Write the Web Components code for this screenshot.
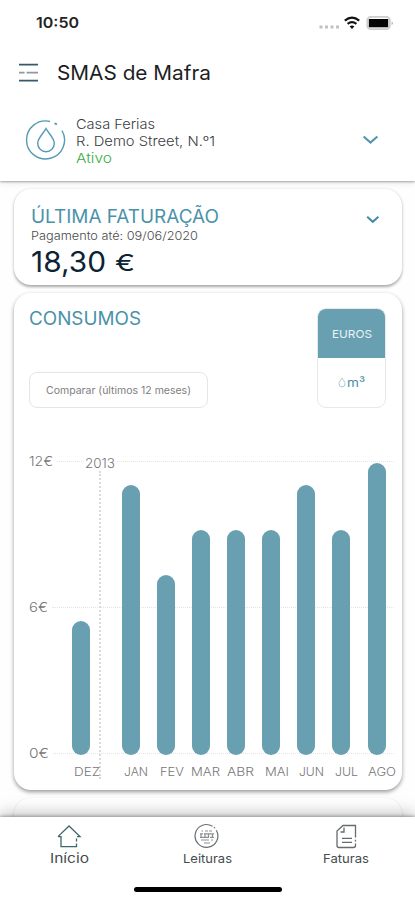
<!DOCTYPE html>
<html lang="pt">
<head>
<meta charset="utf-8">
<meta name="viewport" content="width=device-width, initial-scale=1">
<title>SMAS de Mafra</title>
<style>
    body {
        margin: 0;
        background: #ffffff;
        font-family: Inter, "Open Sans", sans-serif;
        overflow: hidden;
    }
</style>
</head>
<body>
<mobile-app></mobile-app>

<script>
// Single line of text, widened so that it fills the given width
class WideText extends HTMLElement {
    constructor() {
        super();
        this.attachShadow({ mode: 'open' });
        this.shadowRoot.innerHTML = `
            <style>
                :host { display: block; white-space: nowrap; }
                span { display: inline-block; transform-origin: 0 50%; }
            </style>
            <span><slot></slot></span>
        `;
    }

    connectedCallback() {
        const span = this.shadowRoot.querySelector('span');
        const target = Number(this.getAttribute('width'));
        const natural = span.getBoundingClientRect().width;
        if (!target || !natural) return;
        this.style.width = target + 'px';
        span.style.transform = `scaleX(${target / natural})`;
    }
}

class StatusBar extends HTMLElement {
    constructor() {
        super();
        this.attachShadow({ mode: 'open' });
    }

    connectedCallback() {
        this.shadowRoot.innerHTML = `
            <style>
                :host {
                    display: flex;
                    justify-content: space-between;
                    height: 46px;
                    padding: 0 20px 0 36px;
                    box-sizing: border-box;
                    color: #242424;
                }
                wide-text { font-size: 15px; font-weight: 600; line-height: 46px; }
                svg { display: block; }
            </style>
            <wide-text width="43">10:50</wide-text>
            <svg width="76" height="46" viewBox="319 0 76 46">
                <g fill="#c2c2c2">
                    <rect x="319.5" y="25.5" width="3" height="3"/>
                    <rect x="325" y="25.5" width="3" height="3"/>
                    <rect x="330.5" y="25.5" width="3" height="3"/>
                    <rect x="336" y="25.5" width="3" height="3"/>
                </g>
                <g fill="none" stroke="#111" stroke-width="2.1">
                    <path d="M344.800 20.600q7.200-5.800 14.400 0"/>
                    <path d="M347.600 23.900q4.400-3.500 8.800 0"/>
                </g>
                <path d="M349.600 26.300q2.400-1.600 4.800 0L352 29z" fill="#111"/>
                <rect x="367.300" y="16.800" width="22.500" height="12.400" rx="3.500" fill="#fff" stroke="#cdcdcd" stroke-width="1.800"/>
                <rect x="368.800" y="19" width="19.400" height="8.300" fill="#050505"/>
                <path d="M391.600 21.500q2.600 1.700 0 3.600z" fill="#a8a8a8"/>
            </svg>
        `;
    }
}

class AppHeader extends HTMLElement {
    constructor() {
        super();
        this.attachShadow({ mode: 'open' });
    }

    connectedCallback() {
        this.shadowRoot.innerHTML = `
            <style>
                :host {
                    display: block;
                    position: relative;
                    height: 181px;
                    background: #fff;
                    box-shadow: 0 1px 2px rgba(0, 0, 0, .32), 0 3px 6px rgba(0, 0, 0, .07);
                }
                .title { display: flex; align-items: center; height: 54px; padding-left: 19px; gap: 19px; }
                .title wide-text { font-size: 20px; color: #1d1d1f; }
                .place { display: flex; align-items: center; height: 80px; padding: 0 36px 0 25px; }
                .lines { flex: 1; margin: 2px 0 0 10px; font-size: 13.700px; line-height: 17px; font-weight: 300; color: #3c4043; }
                .lines .state { color: #35ab45; }
                svg { display: block; flex: none; }
            </style>
            <status-bar></status-bar>
            <div class="title">
                <svg width="19" height="20" viewBox="0 0 19 20" fill="none" stroke-width="1.7">
                    <path d="M0 1.6h19M0 17.6h19" stroke="#37596a"/>
                    <path d="M0 9.6h5.6M7.6 9.6H19" stroke="#8b9b9f"/>
                </svg>
                <wide-text width="154">SMAS de Mafra</wide-text>
            </div>
            <div class="place">
                <svg width="41" height="42" viewBox="0 0 41 42" fill="none" stroke="#5599b2" stroke-width="1.4">
                    <path d="M25 2.500A19 19 0 1 0 37 11.500"/>
                    <path d="M29.500 4.200l2.400 1.200" stroke-width="1.800"/>
                    <path d="M21 9.500C18.600 14.400 12.700 18.800 12.700 24.400a8.300 8.300 0 0 0 16.600 0C29.300 18.800 23.400 14.400 21 9.500z"/>
                </svg>
                <div class="lines">
                    <wide-text width="79">Casa Ferias</wide-text>
                    <wide-text width="139">R. Demo Street, N.º1</wide-text>
                    <wide-text class="state" width="36">Ativo</wide-text>
                </div>
                <svg width="17" height="12" viewBox="0 0 17 12" fill="none" stroke="#5097ae" stroke-width="2.1">
                    <path d="M1.600 2.500l6.900 6 6.900-6"/>
                </svg>
            </div>
        `;
    }
}

class InfoCard extends HTMLElement {
    constructor() {
        super();
        this.attachShadow({ mode: 'open' });
        this.shadowRoot.innerHTML = `
            <style>
                :host {
                    display: block;
                    box-sizing: border-box;
                    border-radius: 17px;
                    background: #fff;
                    box-shadow: 0 1.500px 3px rgba(0, 0, 0, .34);
                }
            </style>
            <slot></slot>
        `;
    }
}

class LastInvoice extends HTMLElement {
    constructor() {
        super();
        this.attachShadow({ mode: 'open' });
    }

    connectedCallback() {
        this.shadowRoot.innerHTML = `
            <style>
                :host { display: flex; justify-content: space-between; padding: 17px 22px 0 16.500px; color: #4c4c4c; }
                .heading { font-size: 18px; line-height: 22px; color: #4a92aa; }
                .due { font-size: 11.300px; line-height: 16px; font-weight: 300; }
                .amount { display: flex; gap: 9px; line-height: 36px; color: #0c2333; }
                .value { font-size: 28.500px; }
                .unit { font-size: 23px; line-height: 38px; }
                svg { display: block; margin-top: 9px; }
            </style>
            <div>
                <wide-text class="heading" width="188">ÚLTIMA FATURAÇÃO</wide-text>
                <wide-text class="due" width="167">Pagamento até: 09/06/2020</wide-text>
                <div class="amount">
                    <wide-text class="value" width="75">18,30</wide-text>
                    <wide-text class="unit" width="20">€</wide-text>
                </div>
            </div>
            <svg width="14" height="10" viewBox="0 0 14 10" fill="none" stroke="#438ca5" stroke-width="2">
                <path d="M1.200 1.800l5.600 5 5.600-5"/>
            </svg>
        `;
    }
}

class UnitSwitch extends HTMLElement {
    constructor() {
        super();
        this.attachShadow({ mode: 'open' });
    }

    connectedCallback() {
        this.shadowRoot.innerHTML = `
            <style>
                :host {
                    display: flex;
                    flex-direction: column;
                    width: 69px;
                    height: 100px;
                    box-sizing: border-box;
                    border: 1px solid #e6e9ea;
                    border-radius: 9px;
                    overflow: hidden;
                    color: #4b8fa6;
                }
                div { display: flex; align-items: center; justify-content: center; font-size: 11px; }
                .on { height: 49px; margin: -1px -1px 0; background: #68a0b1; color: #e9f4f7; padding-top: 1px; }
                .off { flex: 1; gap: 1px; font-size: 12px; }
            </style>
            <div class="on"><wide-text width="40">EUROS</wide-text></div>
            <div class="off">
                <svg width="8" height="11" viewBox="0 0 8 11" fill="none" stroke="#a9cbd6" stroke-width="1">
                    <path d="M4 1C3 3 1 4.600 1 6.900a3 3 0 0 0 6 0C7 4.600 5 3 4 1z"/>
                </svg>
                <wide-text width="18">m³</wide-text>
            </div>
        `;
    }
}

class UsageChart extends HTMLElement {
    constructor() {
        super();
        this.attachShadow({ mode: 'open' });
    }

    connectedCallback() {
        // [month, bar height in px, label width, label shift from the bar centre]
        const months = [
            ['DEZ', 134.500, 26, 5.500],
            ['JAN', 270, 24, 5],
            ['FEV', 180, 24, 6],
            ['MAR', 225, 29, 5],
            ['ABR', 225, 27, 5],
            ['MAI', 225, 24, 5.500],
            ['JUN', 270, 25, 5],
            ['JUL', 225, 23, 5],
            ['AGO', 292, 28, 5],
        ];
        const columns = months.map(([name, height, width, shift]) => `
            <div class="month">
                <i style="height:${height}px"></i>
                <wide-text width="${width}" style="margin-left:${shift * 2}px">${name}</wide-text>
            </div>`).join('');
        const ticks = [['12€', 24], ['6€', 19], ['0€', 20]].map(([name, width]) =>
            `<div class="tick"><wide-text width="${width}">${name}</wide-text><hr></div>`).join('');

        this.shadowRoot.innerHTML = `
            <style>
                :host { display: grid; height: 334px; color: #777; }
                .axis, .plot, .year { grid-area: 1 / 1; }
                .tick { display: flex; align-items: center; gap: 4px; height: 16px; margin: 0 8px 130px 15px; font-size: 13.500px; font-weight: 300; }
                .tick:last-child { margin-bottom: 0; }
                hr { flex: 1; border: 0; border-top: 1px dotted #e4e4e4; margin: 0; }
                .plot { display: flex; align-items: flex-end; height: 326px; padding-left: 49.500px; }
                .month { display: flex; flex-direction: column; align-items: center; flex: none; width: 35.150px; }
                .month:first-child { margin-right: 14.350px; }
                .month i { width: 18px; border-radius: 9px; background: #68a0b1; }
                .month wide-text { font-size: 11.300px; font-weight: 300; line-height: 14px; margin-top: 10px; }
                .year { justify-self: start; display: flex; flex-direction: column; align-items: center; margin-left: 70px; padding-top: 2px; }
                .year wide-text { background: #fff; font-size: 13px; line-height: 16px; font-weight: 300; padding: 0 1px; }
                .year i { flex: 1; border-left: 2px dotted #dadada; margin-bottom: 8px; }
            </style>
            <div class="axis">${ticks}</div>
            <div class="year"><wide-text width="30">2013</wide-text><i></i></div>
            <div class="plot">${columns}</div>
        `;
    }
}

class UsageCard extends HTMLElement {
    constructor() {
        super();
        this.attachShadow({ mode: 'open' });
    }

    connectedCallback() {
        this.shadowRoot.innerHTML = `
            <style>
                :host { display: block; padding-top: 15px; }
                header { display: flex; justify-content: space-between; padding: 0 15.500px 0 15px; height: 145px; }
                .left { display: flex; flex-direction: column; }
                .heading { font-size: 18px; line-height: 22px; color: #4a92aa; }
                .compare {
                    display: flex;
                    align-items: center;
                    justify-content: center;
                    width: 179px;
                    height: 36px;
                    box-sizing: border-box;
                    margin-top: 42px;
                    border: 1px solid #e6e6e6;
                    border-radius: 8px;
                    font-size: 10.300px;
                    color: #808080;
                }
            </style>
            <header>
                <div class="left">
                    <wide-text class="heading" width="112">CONSUMOS</wide-text>
                    <div class="compare"><wide-text width="145">Comparar (últimos 12 meses)</wide-text></div>
                </div>
                <unit-switch></unit-switch>
            </header>
            <usage-chart></usage-chart>
        `;
    }
}

class TabBar extends HTMLElement {
    constructor() {
        super();
        this.attachShadow({ mode: 'open' });
    }

    connectedCallback() {
        this.shadowRoot.innerHTML = `
            <style>
                :host {
                    display: block;
                    position: relative;
                    height: 83px;
                    background: #fff;
                    box-shadow: 0 -1px 3px rgba(0, 0, 0, .3), 0 -3px 16px rgba(0, 0, 0, .26);
                    color: #454c4e;
                }
                nav { display: flex; height: 70px; }
                a { display: flex; flex: 1; flex-direction: column; align-items: center; padding-top: 6px; font-size: 11.700px; }
                a wide-text { line-height: 16px; margin-top: 2px; }
                .active { font-size: 13px; }
                .active wide-text { margin-top: 1px; }
                svg { display: block; }
                .home { width: 148px; height: 4.500px; border-radius: 3px; background: #000; margin: 0 auto; }
            </style>
            <nav>
                <a class="active">
                    <svg width="26" height="26" viewBox="0 0 26 26" fill="none" stroke="#3f6769" stroke-width="1.300">
                        <path d="M2 13.600L13 3l11 10.600h-3M2 13.600h3v10h15.500v-3M20.500 18.500v-3"/>
                    </svg>
                    <wide-text width="39">Início</wide-text>
                </a>
                <a>
                    <svg width="26" height="26" viewBox="0 0 26 26" fill="none" stroke="#6b7173" stroke-width="1.200">
                        <path d="M18.500 3.300A11.400 11.400 0 1 0 22.300 7.200M20 4.200l1 1"/>
                        <g stroke="#8b8f91">
                            <path d="M7.500 8h1.500m2 0h3m1 0h3M7 17h8m2 0h2M10 20h6"/>
                            <path d="M6 10.800h3m1 0h10M6 14.300h9m1 0h4M7 10.800v3.500M11 10.800v3.500M14.500 10.800v3.500M18.500 10.800v3.500"/>
                        </g>
                    </svg>
                    <wide-text width="49">Leituras</wide-text>
                </a>
                <a>
                    <svg width="26" height="26" viewBox="0 0 26 26" fill="none" stroke="#666c6e" stroke-width="1.300">
                        <path d="M22.500 14.500V2.500H10L4 8v14.500q0 2 2 2h14.500q2 0 2-2V20.500M22.500 18.400v-1.600"/>
                        <path d="M11 4.500V9H7.500M9 15.400h10M9 19.400h10"/>
                    </svg>
                    <wide-text width="46">Faturas</wide-text>
                </a>
            </nav>
            <div class="home"></div>
        `;
    }
}

class MobileApp extends HTMLElement {
    constructor() {
        super();
        this.attachShadow({ mode: 'open' });
    }

    connectedCallback() {
        this.shadowRoot.innerHTML = `
            <style>
                :host { display: flex; flex-direction: column; width: 415px; height: 900px; overflow: hidden; }
                main { flex: 1; min-height: 0; overflow: hidden; padding: 8px 13.500px 0 14px; background: #fefefe; }
                info-card { margin-bottom: 8px; }
                .invoice { height: 96px; }
                .usage { height: 497px; box-shadow: 0 2px 4px rgba(0, 0, 0, .4); }
                .next { height: 60px; box-shadow: 0 1px 3px rgba(0, 0, 0, .16); }
            </style>
            <app-header></app-header>
            <main>
                <info-card class="invoice"><last-invoice></last-invoice></info-card>
                <info-card class="usage"><usage-card></usage-card></info-card>
                <info-card class="next"></info-card>
            </main>
            <tab-bar></tab-bar>
        `;
    }
}

customElements.define('wide-text', WideText);
customElements.define('status-bar', StatusBar);
customElements.define('info-card', InfoCard);
customElements.define('last-invoice', LastInvoice);
customElements.define('unit-switch', UnitSwitch);
customElements.define('usage-chart', UsageChart);
customElements.define('usage-card', UsageCard);
customElements.define('app-header', AppHeader);
customElements.define('tab-bar', TabBar);
customElements.define('mobile-app', MobileApp);
</script>
</body>
</html>
